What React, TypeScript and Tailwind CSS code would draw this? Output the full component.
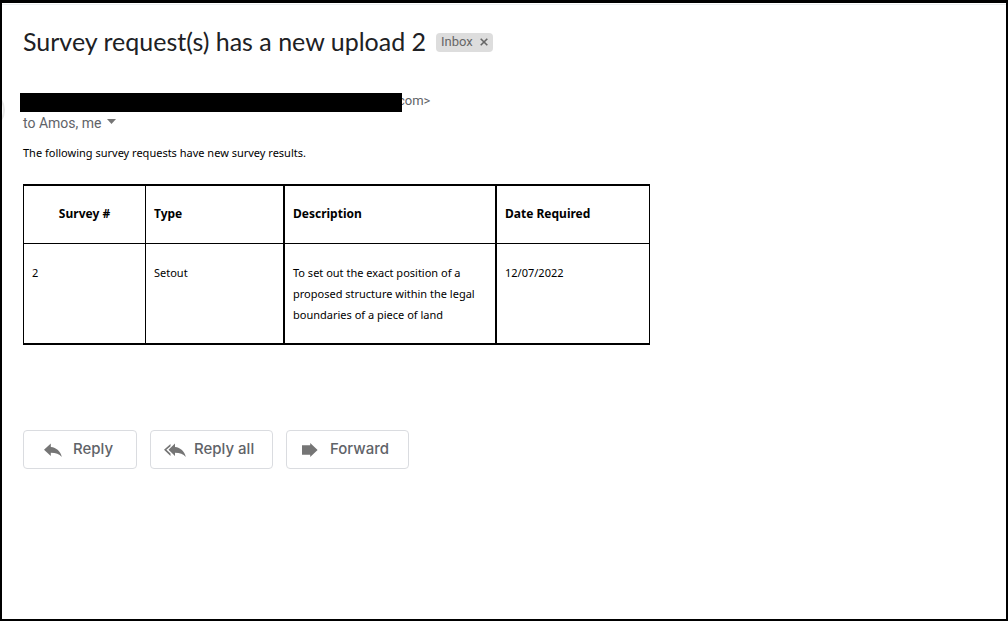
import React from 'react';

interface Survey {
  id: number;
  type: string;
  description: string;
  dateRequired: string;
}

const surveys: Survey[] = [
  {
    id: 2,
    type: 'Setout',
    description: 'To set out the exact position of a proposed structure within the legal boundaries of a piece of land',
    dateRequired: '12/07/2022',
  },
];

const ReplyIcon = () => (
  <svg width="18" height="14" viewBox="0 0 18 14" fill="#757575" aria-hidden="true">
    <path d="M0 6.8 L6.8 0.6 V4.1 C12.5 4.7 16.5 8.3 17.8 14 C15.2 11 12 9.8 6.8 9.8 V13 Z" />
  </svg>
);

const ReplyAllIcon = () => (
  <svg width="22" height="14" viewBox="0 0 22 14" fill="#757575" aria-hidden="true">
    <path d="M6.5 1 V3.3 L2.4 6.8 L6.5 10.5 V12.9 L0 6.8 Z" />
    <path d="M4.5 6.8 L11 0.6 V4.1 C16.5 4.7 20.5 8.3 21.8 14 C19.2 11 16 9.8 11 9.8 V13 Z" />
  </svg>
);

const ForwardIcon = () => (
  <svg width="16" height="14" viewBox="0 0 16 14" fill="#757575" aria-hidden="true">
    <path d="M0 2.2 H8.2 V0 L15.6 7 L8.2 14 V11.8 H0 Z" />
  </svg>
);

interface ActionButtonProps {
  label: string;
  icon: React.ReactNode;
  className: string;
}

const ActionButton: React.FC<ActionButtonProps> = ({ label, icon, className }) => (
  <button
    type="button"
    className={`flex h-[39px] items-center rounded border border-[#dadce0] font-['Inter',sans-serif] text-[15px] font-medium text-[#5f6368] ${className}`}
  >
    {icon}
    <span>{label}</span>
  </button>
);

const SurveyTable = () => (
  <table className="mt-[21px] w-full max-w-[627px] table-fixed border-separate border-spacing-0 border-t-2 border-l border-black text-left leading-[21px]">
    <colgroup>
      <col className="w-[122px]" />
      <col className="w-[139px]" />
      <col className="w-[212px]" />
      <col />
    </colgroup>
    <thead className="text-xs leading-[21px]">
      <tr>
        <th className="border-r border-b border-black px-2 pt-[17px] pb-[19px] text-center">Survey #</th>
        <th className="border-r-2 border-b border-black px-2 pt-[17px] pb-[19px]">Type</th>
        <th className="border-r-2 border-b border-black px-2 pt-[17px] pb-[19px]">Description</th>
        <th className="border-r border-b border-black px-2 pt-[17px] pb-[19px]">Date Required</th>
      </tr>
    </thead>
    <tbody>
      {surveys.map((survey) => (
        <tr key={survey.id} className="align-top">
          <td className="border-r border-b-2 border-black px-2 py-[18px]">{survey.id}</td>
          <td className="border-r-2 border-b-2 border-black px-2 py-[18px]">{survey.type}</td>
          <td className="border-r-2 border-b-2 border-black px-2 py-[18px]">{survey.description}</td>
          <td className="border-r border-b-2 border-black px-2 py-[18px]">{survey.dateRequired}</td>
        </tr>
      ))}
    </tbody>
  </table>
);

export default function App() {
  return (
    <div className="relative min-h-screen overflow-hidden border-2 border-t-3 border-black bg-white font-['Roboto',sans-serif] text-[13px] text-[#5f6368]">
      <div className="absolute top-[87px] -left-[37px] size-10 rounded-full border-2 border-[#e8e8e8]" />
      <div className="mt-px h-px bg-[#eceff1]" />

      <main className="px-[21px] pt-5">
        <header className="flex items-center gap-2.5">
          <h1 className="pb-0.5 font-['Lato',sans-serif] text-[25px] leading-8 text-[#202124]">
            Survey request(s) has a new upload 2
          </h1>
          <span className="flex h-[19px] items-center gap-[7px] rounded bg-[#ddd] px-[5px] text-[#666]">
            Inbox
            <button type="button" aria-label="Remove label Inbox">
              <svg width="8" height="8" viewBox="0 0 8 8" stroke="#666" strokeWidth="1.6" aria-hidden="true">
                <path d="M0.7 0.7 L7.3 7.3 M7.3 0.7 L0.7 7.3" />
              </svg>
            </button>
          </span>
        </header>

        <div className="-ml-[3px] mt-[34px] flex h-[19px] items-start">
          <div className="z-10 h-[19px] w-full max-w-[382px] bg-black" />
          <span className="-ml-1 leading-4">com&gt;</span>
        </div>
        <button type="button" className="mt-px flex h-5 items-center gap-1.5 text-sm">
          to Amos, me
          <svg className="mb-1" width="9" height="5" viewBox="0 0 9 5" fill="#757575" aria-hidden="true">
            <path d="M0 0 H9 L4.5 5 Z" />
          </svg>
        </button>

        <section className="mt-[9px] font-['Noto_Sans',sans-serif] text-[11px] text-black">
          <p className="leading-[21px]">The following survey requests have new survey results.</p>
          <SurveyTable />
        </section>

        <div className="mt-[85px] flex flex-wrap gap-[13px]">
          <ActionButton label="Reply" icon={<ReplyIcon />} className="min-w-[114px] gap-[11px] pl-5 pr-4" />
          <ActionButton label="Reply all" icon={<ReplyAllIcon />} className="min-w-[123px] gap-2 px-[13px]" />
          <ActionButton label="Forward" icon={<ForwardIcon />} className="min-w-[123px] gap-3 px-[15px]" />
        </div>
      </main>
    </div>
  );
}
